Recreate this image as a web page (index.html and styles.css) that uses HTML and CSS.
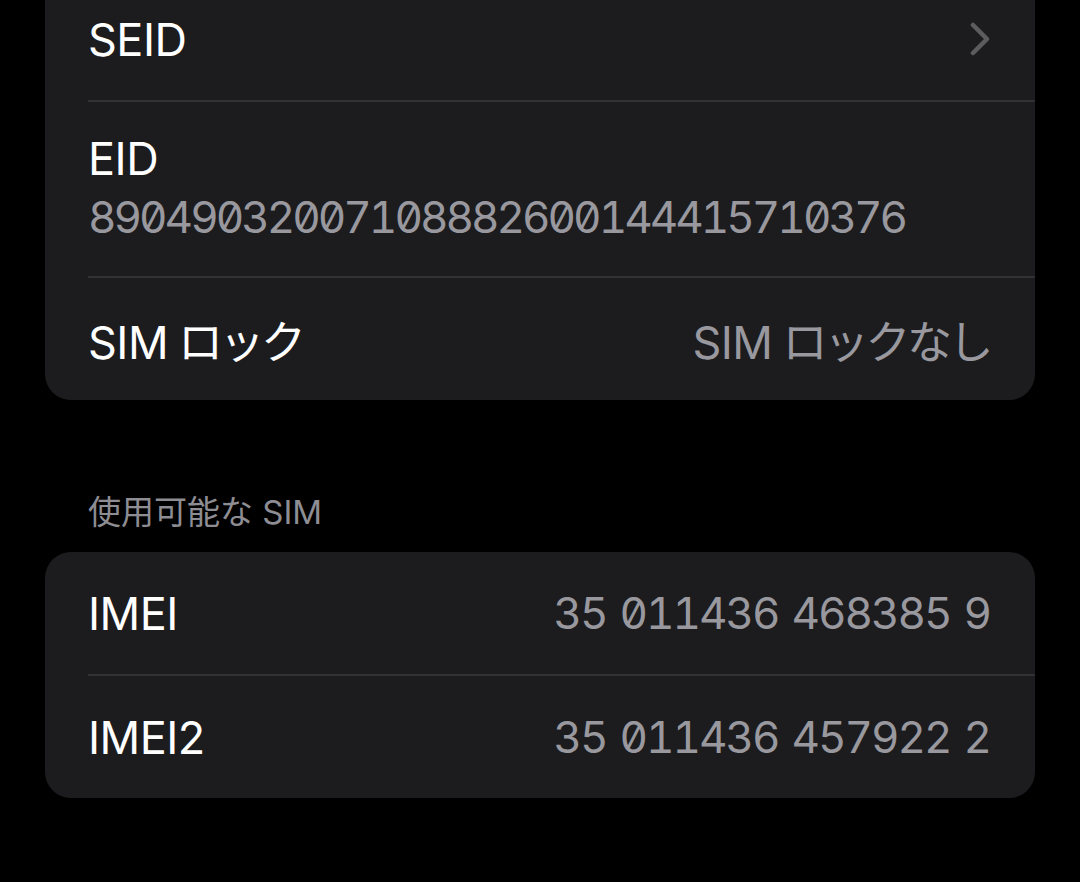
FILE: index.html
```html
<!DOCTYPE html>
<html lang="ja">
<head>
<meta charset="utf-8">
<link rel="stylesheet" href="styles.css">
</head>
<body>
<div class="page">
  <div class="card first">
    <div class="row">
      <span class="label">SEID</span>
      <svg class="chev" width="20" height="34" viewBox="0 0 20 34"><path d="M3 3 L17 17 L3 31" fill="none" stroke="#5c5c60" stroke-width="4.5" stroke-linecap="round" stroke-linejoin="round"/></svg>
    </div>
    <div class="sep"></div>
    <div class="row tall">
      <span class="label">EID</span>
      <span class="num eid">89049032007108882600144415710376</span>
    </div>
    <div class="sep"></div>
    <div class="row">
      <span class="label">SIM<span class="ja">ロック</span></span>
      <span class="value">SIM<span class="ja">ロックなし</span></span>
    </div>
  </div>

  <div class="header">使用可能な SIM</div>

  <div class="card">
    <div class="row">
      <span class="label">IMEI</span>
      <span class="num imei">35 011436 468385 9</span>
    </div>
    <div class="sep"></div>
    <div class="row">
      <span class="label">IMEI2</span>
      <span class="num imei">35 011436 457922 2</span>
    </div>
  </div>
</div>
</body>
</html>
```

FILE: styles.css
```css
html, body {
  margin: 0;
  padding: 0;
  background: #000;
  height: 100%;
  overflow: hidden;
}
.page {
  padding: 0 45px;
  font-family: Inter, "Noto Sans CJK JP", sans-serif;
}
.card {
  background: #1c1c1e;
  border-radius: 26px;
  overflow: hidden;
}
.card.first {
  margin-top: -22px;
  border-radius: 0 0 26px 26px;
}
.row {
  height: 122px;
  display: flex;
  align-items: center;
  justify-content: space-between;
  padding: 0 45px 0 43px;
}
.row.tall {
  height: 174px;
  flex-direction: column;
  align-items: flex-start;
  justify-content: center;
  gap: 4px;
  padding-bottom: 4px;
  box-sizing: border-box;
}
.label {
  color: #fff;
  font-size: 45px;
  letter-spacing: -0.5px;
}
.value {
  color: #98989e;
  font-size: 45px;
  letter-spacing: -0.5px;
}
.ja {
  letter-spacing: -3.5px;
  margin-left: 10px;
}
.num {
  color: #98989e;
  font-size: 44px;
  font-feature-settings: "tnum" 1, "zero" 1;
}
.eid {
  letter-spacing: -3px;
}
.imei {
  letter-spacing: -2px;
  word-spacing: 3px;
}
.sep {
  height: 2px;
  background: #323235;
  margin-left: 43px;
}
.chev {
  display: block;
}
.header {
  color: #8d8d93;
  font-size: 33px;
  padding: 92px 0 20px 43px;
  line-height: 40px;
}
```
